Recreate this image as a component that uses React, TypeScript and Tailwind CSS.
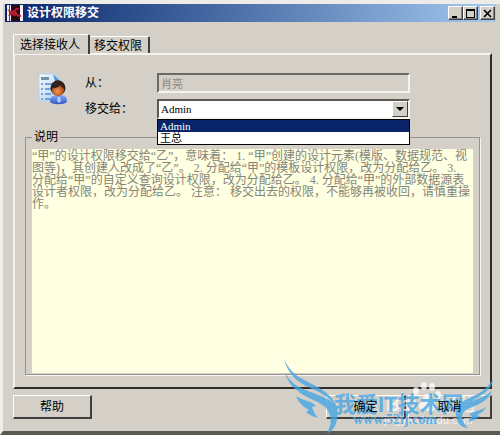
import { useState } from "react";
import clsx from "clsx";

const tabs = ["选择接收人", "移交权限"];
const users = ["Admin", "王总"];

const description = `“甲”的设计权限移交给“乙”，意味着： 1. “甲”创建的设计元素(模版、数据规范、视
图等)，其创建人改成了“乙”。 2. 分配给“甲”的模板设计权限，改为分配给乙。 3.
分配给“甲”的自定义查询设计权限，改为分配给乙。 4. 分配给“甲”的外部数据源表
设计者权限，改为分配给乙。 注意： 移交出去的权限，不能够再被收回，请慎重操
作。`;

const raised = "border border-t-white border-l-white border-r-[#404040] border-b-[#404040]";
const captionButton = clsx(raised, "flex h-3.5 w-[15px] items-center justify-center bg-[#d4d0c8] shadow-[inset_-1px_-1px_#808080]");
const footerButton = clsx(raised, "h-6 border-r-2 border-b-2 border-r-[#5c5854] border-b-[#5c5854] text-xs");

const Logo = () => (
  <svg viewBox="0 0 16 16" className="h-4 w-4 shrink-0" aria-hidden="true">
    <path d="M0 0h16v16H0z" fill="#f6eef2" />
    <path d="M4 0h9v16H4z" fill="#2a0a12" />
    <path d="M2 0h1v16H2z" fill="#5c3a4a" />
    <path d="M0 4l4 2 3-1 1 3 2 1-2 2-3-1-4 1 2-3z" fill="#b01c30" />
    <path d="M12 4c-4-1-5 2-3 4s0 3 5 3" fill="none" stroke="#b81c30" strokeWidth="2" />
  </svg>
);

const UserReport = () => (
  <svg viewBox="0 0 32 32" className="h-8 w-8" aria-hidden="true">
    <defs>
      <linearGradient id="sheet" x1="0" y1="0" x2="1" y2="1">
        <stop offset="0" stopColor="#f7fcff" />
        <stop offset="1" stopColor="#a9cdf1" />
      </linearGradient>
      <radialGradient id="face" cx=".45" cy=".6" r=".6">
        <stop offset="0" stopColor="#f19a52" />
        <stop offset="1" stopColor="#a6400f" />
      </radialGradient>
      <linearGradient id="body" x1="0" y1="0" x2="0" y2="1">
        <stop offset="0" stopColor="#88acf5" />
        <stop offset="1" stopColor="#2c55c4" />
      </linearGradient>
    </defs>
    <path d="M2 1h15l6 6v21H2z" fill="url(#sheet)" stroke="#b4d3ee" />
    <path d="M16 1l7 7h-5z" fill="#4b93d5" />
    <path d="M4 4h8v3H4z" fill="#7190aa" />
    <path d="M4 11h2m2 0h8M4 16h2m2 0h6M4 21h2m2 0h6M4 26h2m2 0h6" stroke="#568bc4" strokeWidth="1.5" />
    <path d="M13 29c0-6 3-7 9-7s8 1 8 7c-3 3-14 3-17 0z" fill="url(#body)" />
    <path d="M21 24h2l1 4-2 2-2-2z" fill="#b8cefa" />
    <circle cx="21" cy="15" r="7.5" fill="#35221f" />
    <circle cx="21" cy="17" r="6" fill="url(#face)" />
    <path d="M14 15c4 1 8-1 9-3 1 2 3 3 5 3-1-10-13-10-14 0z" fill="#30201e" />
  </svg>
);

// site stamp, lies over the frame but under the button labels
const Watermark = () => (
  <svg
    viewBox="0 0 220 80"
    className="pointer-events-none absolute right-0 -bottom-1 z-10 h-20 w-[220px]"
    aria-hidden="true"
  >
    <g fill="#fff" opacity=".75">
      <ellipse cx="136" cy="36" rx="3" ry="4" />
      <ellipse cx="144" cy="31" rx="3" ry="4" />
      <ellipse cx="152" cy="32" rx="3" ry="4" />
      <ellipse cx="158" cy="40" rx="3" ry="4" />
      <path d="M146 39c5 0 6 6 9 9s1 9-4 8-8 0-10-1-3-5 0-8 2-8 5-8z" />
      <text x="106" y="56" fontSize="20" fontWeight="700" fontFamily="Liberation Sans">Bai</text>
      <text x="160" y="56" fontSize="18" fontFamily="Noto Sans CJK SC">经验</text>
      <text x="104" y="69" fontSize="11" fontFamily="Liberation Sans">jingyan.baidu.com</text>
    </g>
    <g fill="#45a5e4" opacity=".8">
      <path d="M4 4c6 14 16 19 26 24 14 7 24 14 27 25-6-10-15-15-27-20C18 27 8 20 4 4z" />
      <path d="M5 17c7 15 19 17 31 22 10 4 17 7 21 13 2 13-2 23-9 26-1 0-1 0 0-2 5-9 3-19-4-25-8-6-18-8-26-15-7-5-11-11-13-19z" />
      <path d="M16 41c6 5 15 4 20 10l-4 1c1 4 3 7 6 11-4-1-9-3-12-6l3-2c-6-3-10-7-13-14z" />
      <path d="M213 24c-6 11-15 15-24 19-11 5-14 10-13 17 1 8 5 13 12 13-5-5-7-10-5-15 2-4 8-5 14-8 8-4 13-8 15-14-6 5-12 7-20 10 10-6 20-11 21-22z" />
      <path d="M206 52c-5 4-14 4-17 8l3 1-4 6c5-1 9-3 12-6l-3-1c4-2 7-4 9-8z" />
      <text x="54" y="57" fontSize="22" fontWeight="700" fontFamily="Liberation Sans, Noto Sans CJK SC">我爱IT技术网</text>
      <text x="73" y="69" fontSize="14" fontWeight="700" fontFamily="Liberation Serif">www.52ij.com</text>
    </g>
  </svg>
);

const App = () => {
  const [tab, setTab] = useState(0);
  const [user, setUser] = useState("Admin");
  const [open, setOpen] = useState(true);

  const pick = (name: string) => {
    setUser(name);
    setOpen(false);
  };

  return (
    <main className="relative flex min-h-screen flex-col border-t-4 border-b-4 border-l-3 border-t-[#eeece8] border-b-[#5c5854] border-l-[#f0eee9] bg-[#d4d0c8] pr-1 pl-0.5 font-['Liberation_Serif','Noto_Sans_CJK_SC',serif] text-xs text-black">
      <header className="flex h-[18px] items-center gap-1 bg-linear-to-r from-[#0a246a] to-[#a6caf0] pr-px pl-0.5 text-white">
        <Logo />
        <h1 className="flex-1 text-xs font-bold">设计权限移交</h1>
        <div className="flex">
          <button aria-label="最小化" className={captionButton}>
            <svg viewBox="0 0 9 9" className="h-[9px] w-[9px]"><path d="M1 7h5v2H1z" /></svg>
          </button>
          <button aria-label="最大化" className={captionButton}>
            <svg viewBox="0 0 9 9" className="h-[9px] w-[9px]"><path d="M0 0h9v9H0zM1 2v6h7V2z" fillRule="evenodd" /></svg>
          </button>
          <button aria-label="关闭" className={clsx(captionButton, "ml-0.5")}>
            <svg viewBox="0 0 9 9" className="h-[9px] w-[9px]"><path d="M1 1l7 7M8 1L1 8" stroke="#000" strokeWidth="1.6" /></svg>
          </button>
        </div>
      </header>

      <Watermark />

      <div className="flex flex-1 flex-col pt-3 pr-1 pb-3 pl-2">
        <div role="tablist" className="flex h-5 items-end">
          {tabs.map((name, i) => (
            <button
              key={name}
              role="tab"
              aria-selected={tab === i}
              onClick={() => setTab(i)}
              className={clsx(
                "rounded-t-xs border-t border-r-2 border-t-white border-r-[#404040] text-xs",
                i === 0 ? "border-l border-l-white pr-2 pl-1.5" : "pr-1.5 pl-1",
                tab === i ? "relative h-5 bg-[#d4d0c8]" : "h-[18px]"
              )}
            >
              {name}
            </button>
          ))}
        </div>

        <section className="-mt-px flex flex-1 flex-col border-2 border-t-[#f6f4f0] border-r-[#302c2c] border-b-[#302c2c] border-l-[#f6f4f0] px-2.5 pt-[18px] pb-3">
          <div className="flex pl-3">
            <UserReport />
            <div className="ml-4 grid flex-1 grid-cols-[72px_1fr] items-center gap-y-1.5 pr-[70px]">
              <label htmlFor="from">从：</label>
              <input
                id="from"
                readOnly
                value="肖亮"
                className="h-5 w-full border-2 border-t-[#6c6864] border-r-[#f6f4f0] border-b-[#f6f4f0] border-l-[#6c6864] px-0.5 text-[11px] text-[#8c8880] outline-none"
              />
              <label htmlFor="to">移交给：</label>
              <div className="relative">
                <select
                  id="to"
                  value={user}
                  onChange={(e) => pick(e.target.value)}
                  className="block h-5 w-full appearance-none border-2 border-t-[#5c5854] border-r-[#f6f4f0] border-b-[#f6f4f0] border-l-[#5c5854] bg-white px-0.5 text-[11px] outline-none"
                >
                  {users.map((name) => (
                    <option key={name}>{name}</option>
                  ))}
                </select>
                <button
                  aria-label="展开"
                  onClick={() => setOpen(!open)}
                  className={clsx(raised, "absolute top-0.5 right-0.5 flex h-4 w-4 items-center justify-center bg-[#d4d0c8]")}
                >
                  <svg viewBox="0 0 8 4" className="h-1 w-2"><path d="M0 0h8L4 4z" /></svg>
                </button>
                {open && (
                  <ul role="listbox" className="absolute top-full left-0 z-20 w-full border border-black bg-white text-[11px] leading-3">
                    {users.map((name) => (
                      <li
                        key={name}
                        role="option"
                        aria-selected={user === name}
                        onClick={() => pick(name)}
                        className={clsx("h-3 px-0.5", user === name && "bg-[#0a246a] text-white")}
                      >
                        {name}
                      </li>
                    ))}
                  </ul>
                )}
              </div>
            </div>
          </div>

          <fieldset className="mt-2.5 flex-1 border border-[#96928c] px-1.5 pt-1 shadow-[1px_1px_#f6f4f0]">
            <legend className="px-0.5 leading-4">说明</legend>
            <textarea
              readOnly
              aria-label="说明"
              value={description}
              className="block h-56 w-full resize-none overflow-hidden bg-[#ffffe1] pt-px leading-3 whitespace-pre text-[#85857a] outline-none"
            />
          </fieldset>
        </section>

        <footer className="mt-1.5 flex">
          <button className={clsx(footerButton, "w-[79px]")}>帮助</button>
          <button className={clsx(footerButton, "ml-auto w-20")}>
            <span className="relative z-20">确定</span>
          </button>
          <button className={clsx(footerButton, "ml-0.5 w-[84px]")}>
            <span className="relative z-20">取消</span>
          </button>
        </footer>
      </div>
    </main>
  );
};

export default App;
